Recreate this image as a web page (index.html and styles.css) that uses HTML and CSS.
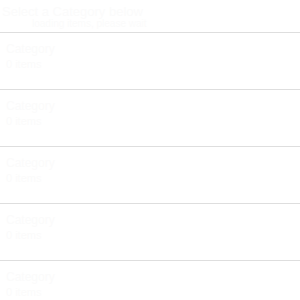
FILE: index.html
```html
<!DOCTYPE html>
<html lang="en">
<head>
    <meta charset="UTF-8">
    <meta name="viewport" content="width=device-width, initial-scale=1.0">
    <title>List</title>
    <link rel="stylesheet" href="styles.css">
</head>
<body>
    <div class="list-header">
        <div class="list-title">Select a Category below</div>
        <div class="list-subtitle">loading items, please wait</div>
    </div>
    <div class="list">
        <div class="row">
            <div class="row-title">Category</div>
            <div class="row-sub">0 items</div>
        </div>
        <div class="row">
            <div class="row-title">Category</div>
            <div class="row-sub">0 items</div>
        </div>
        <div class="row">
            <div class="row-title">Category</div>
            <div class="row-sub">0 items</div>
        </div>
        <div class="row">
            <div class="row-title">Category</div>
            <div class="row-sub">0 items</div>
        </div>
        <div class="row">
            <div class="row-title">Category</div>
            <div class="row-sub">0 items</div>
        </div>
    </div>
</body>
</html>
```

FILE: styles.css
```css
body {
    font-family: "Liberation Sans", Arial, sans-serif;
    background-color: #ffffff;
    color: #fbfbfb;
    margin: 0;
}
.list-header {
    height: 33px;
    padding: 5px 0 0 2px;
    box-sizing: border-box;
    border-bottom: 1px solid #dedede;
}
.list-title {
    font-size: 13px;
    line-height: 13px;
}
.list-subtitle {
    font-size: 10px;
    line-height: 11px;
    padding-left: 30px;
}
.row {
    height: 57px;
    padding: 8px 6px 0;
    box-sizing: border-box;
    border-bottom: 1px solid #dedede;
}
.row:last-child {
    height: 39px;
    border-bottom: none;
}
.row-title {
    font-size: 12px;
    line-height: 16px;
}
.row-sub {
    font-size: 11px;
    line-height: 14px;
}
```
